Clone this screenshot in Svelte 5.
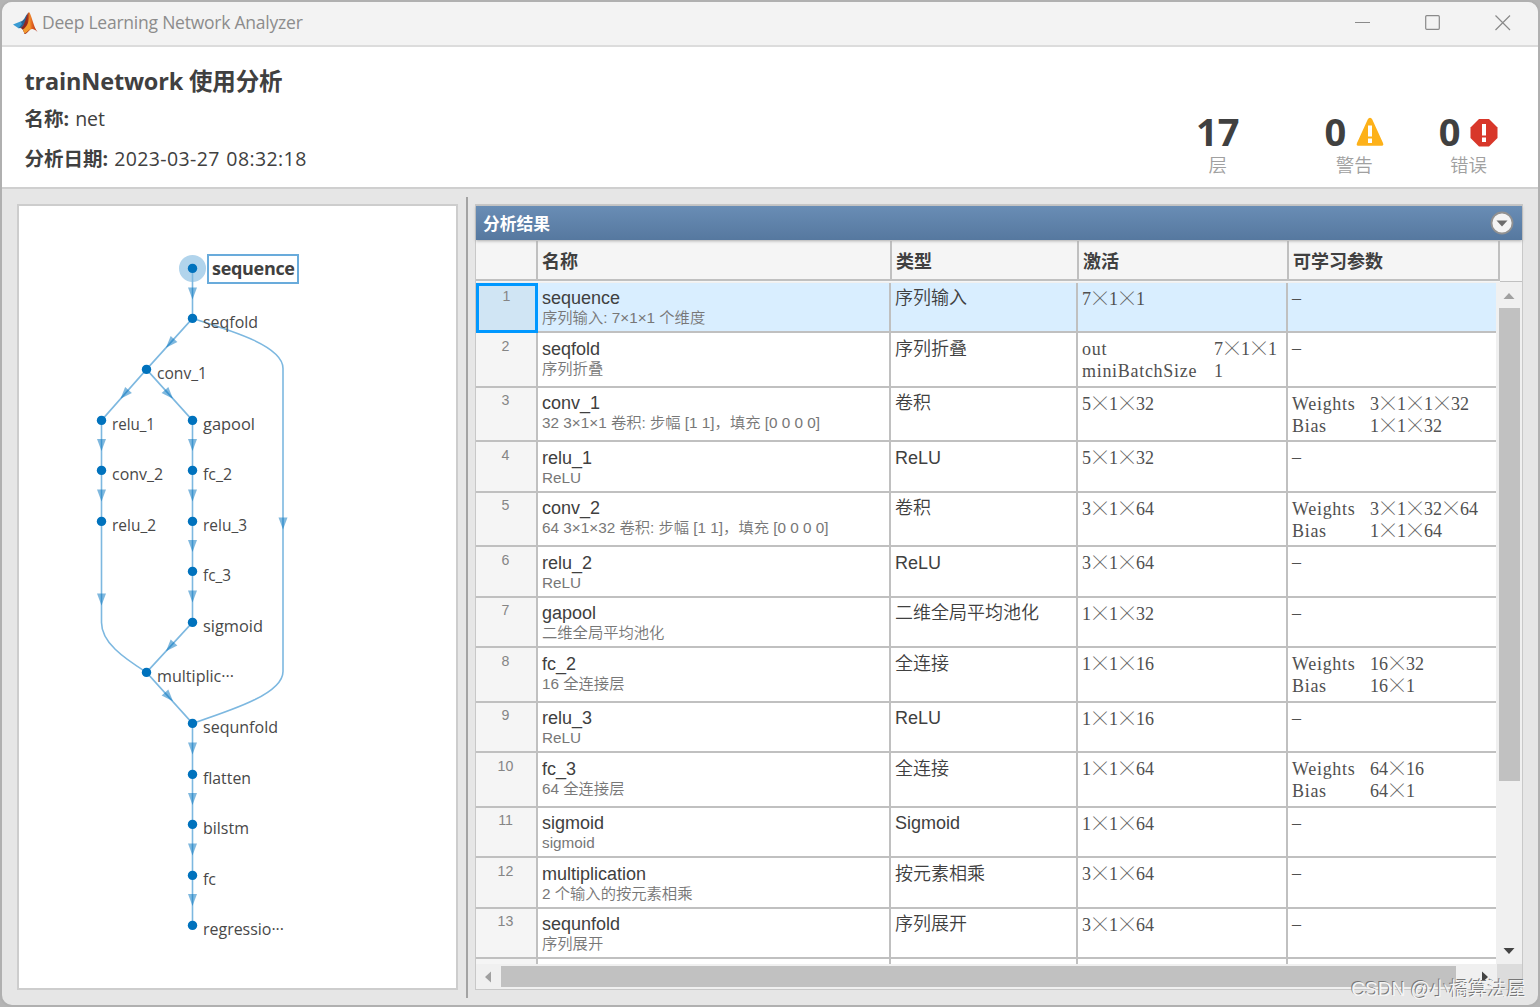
<script lang="ts">
	type Entry = [string, string];

	interface Layer {
		name: string;
		detail: string;
		type: string;
		activations: Entry[];
		learnables: Entry[];
	}

	const layers: Layer[] = [
		{ name: "sequence", detail: "序列输入: 7×1×1 个维度", type: "序列输入", activations: [["", "7×1×1"]], learnables: [] },
		{ name: "seqfold", detail: "序列折叠", type: "序列折叠", activations: [["out", "7×1×1"], ["miniBatchSize", "1"]], learnables: [] },
		{ name: "conv_1", detail: "32 3×1×1 卷积: 步幅 [1 1]，填充 [0 0 0 0]", type: "卷积", activations: [["", "5×1×32"]], learnables: [["Weights", "3×1×1×32"], ["Bias", "1×1×32"]] },
		{ name: "relu_1", detail: "ReLU", type: "ReLU", activations: [["", "5×1×32"]], learnables: [] },
		{ name: "conv_2", detail: "64 3×1×32 卷积: 步幅 [1 1]，填充 [0 0 0 0]", type: "卷积", activations: [["", "3×1×64"]], learnables: [["Weights", "3×1×32×64"], ["Bias", "1×1×64"]] },
		{ name: "relu_2", detail: "ReLU", type: "ReLU", activations: [["", "3×1×64"]], learnables: [] },
		{ name: "gapool", detail: "二维全局平均池化", type: "二维全局平均池化", activations: [["", "1×1×32"]], learnables: [] },
		{ name: "fc_2", detail: "16 全连接层", type: "全连接", activations: [["", "1×1×16"]], learnables: [["Weights", "16×32"], ["Bias", "16×1"]] },
		{ name: "relu_3", detail: "ReLU", type: "ReLU", activations: [["", "1×1×16"]], learnables: [] },
		{ name: "fc_3", detail: "64 全连接层", type: "全连接", activations: [["", "1×1×64"]], learnables: [["Weights", "64×16"], ["Bias", "64×1"]] },
		{ name: "sigmoid", detail: "sigmoid", type: "Sigmoid", activations: [["", "1×1×64"]], learnables: [] },
		{ name: "multiplication", detail: "2 个输入的按元素相乘", type: "按元素相乘", activations: [["", "3×1×64"]], learnables: [] },
		{ name: "sequnfold", detail: "序列展开", type: "序列展开", activations: [["", "3×1×64"]], learnables: [] }
	];

	// graph coordinates are relative to the graph panel
	const nodes = [
		{ label: "seqfold", x: 173.5, y: 113, w: 55 },
		{ label: "conv_1", x: 127.5, y: 164, w: 50 },
		{ label: "relu_1", x: 82.5, y: 215, w: 43 },
		{ label: "gapool", x: 173.5, y: 215, w: 52 },
		{ label: "conv_2", x: 82.5, y: 265, w: 51 },
		{ label: "fc_2", x: 173.5, y: 265, w: 29 },
		{ label: "relu_2", x: 82.5, y: 316, w: 44 },
		{ label: "relu_3", x: 173.5, y: 316, w: 44 },
		{ label: "fc_3", x: 173.5, y: 366, w: 28 },
		{ label: "sigmoid", x: 173.5, y: 417, w: 60 },
		{ label: "multiplic···", x: 127.5, y: 467, w: 77 },
		{ label: "sequnfold", x: 173.5, y: 518, w: 75 },
		{ label: "flatten", x: 173.5, y: 569, w: 48 },
		{ label: "bilstm", x: 173.5, y: 619, w: 46 },
		{ label: "fc", x: 173.5, y: 670, w: 13 },
		{ label: "regressio···", x: 173.5, y: 720, w: 81 }
	];

	const edges = [
		"M173.5 63V113L127.5 164L82.5 215V417C82.5 437 104 452 127.5 467L173.5 518V720",
		"M127.5 164L173.5 215V417L127.5 467",
		"M173.5 113C215 126 264 141 264 163V466C264 488 215 504 173.5 518"
	];

	const arrows = [
		[173.5, 88, 0], [151, 138, 42], [105.5, 189, 42], [150, 189, -42],
		[82.5, 239.5, 0], [173.5, 239.5, 0], [82.5, 290, 0], [173.5, 290, 0],
		[173.5, 340.5, 0], [173.5, 391, 0], [82.5, 394, 0], [264, 318, 0],
		[151, 441.5, 42], [150, 491.5, -42], [173.5, 543, 0], [173.5, 593.5, 0],
		[173.5, 644, 0], [173.5, 694.5, 0]
	];
</script>

{#snippet dims(text: string)}
	{#each text as ch}{#if ch === "×"}<span class="times">×</span>{:else}{ch}{/if}{/each}
{/snippet}

{#snippet entries(list: Entry[])}
	{#if list.length === 0}
		<span class="none">–</span>
	{/if}
	{#each list as [label, value]}
		{#if label}<span class="label">{label}</span>{/if}
		<span class="value" class:alone={!label}>{@render dims(value)}</span>
	{/each}
{/snippet}

<div class="window">
	<header class="titlebar">
		<svg class="logo" width="25" height="24" viewBox="0 0 25 24">
			<defs>
				<linearGradient id="flame" x1="0" x2="1" y1="0" y2="0">
					<stop offset="0" stop-color="#7a2320" />
					<stop offset=".4" stop-color="#9d2a1c" />
					<stop offset=".55" stop-color="#f08a2c" />
					<stop offset=".7" stop-color="#e0601f" />
					<stop offset="1" stop-color="#a8281c" />
				</linearGradient>
			</defs>
			<path d="M0 13.500L7.500 10.500L11 13L8 17L5.500 17.200Z" fill="#3a9bd3" />
			<path d="M7.500 10.500C11 10.500 12 5 15 2L13 11L9 16.500L5.500 17.200L9 13Z" fill="#2a6494" />
			<path d="M16 1C18.500 3 20 15 24.500 21C21 17.500 18.500 17.500 17 19C14.500 21 13.500 23 11.500 23C10.500 20 9.500 17.500 7.500 17C12.500 15 13 3 16 1Z" fill="url(#flame)" />
			<path d="M16 5C16.500 10 14 16 9.800 18.500L11.500 22.500C14.500 21.500 15.500 18.500 17.500 17.500C17 12 17 8 16 5Z" fill="#f39a2e" />
		</svg>
		<span class="caption">Deep Learning Network Analyzer</span>
		<div class="controls">
			<svg width="16" height="16" viewBox="0 0 16 16"><path d="M0 7.500H15" /></svg>
			<svg width="16" height="16" viewBox="0 0 16 16"><rect x=".7" y=".7" width="13.600" height="13.600" rx="1" /></svg>
			<svg width="16" height="16" viewBox="0 0 16 16"><path d="M.5 .5L15 15M15 .5L.5 15" /></svg>
		</div>
	</header>

	<section class="summary">
		<div class="info">
			<h1>trainNetwork 使用分析</h1>
			<p><b>名称:</b> net</p>
			<p><b>分析日期:</b> <span class="date">2023-03-27 08:32:18</span></p>
		</div>
		<div class="stats">
			<div class="stat">
				<div class="count">17</div>
				<div class="unit">层</div>
			</div>
			<div class="stat warnings">
				<div class="count">
					0
					<svg width="28" height="30" viewBox="0 0 28 30">
						<path d="M14 .7Q15.500 .7 16.300 2.500L27 26Q28 28.800 26 28.800H2Q0 28.800 1 26L11.700 2.500Q12.500 .7 14 .7Z" fill="#fdb119" />
						<path d="M12 8.500H16V19.500H12ZM12 21.500H16V26H12Z" fill="#fff" />
					</svg>
				</div>
				<div class="unit">警告</div>
			</div>
			<div class="stat errors">
				<div class="count">
					0
					<svg width="28" height="30" viewBox="0 0 28 30">
						<path d="M9 2H19L27.500 10.500V21L19 29.500H9L.5 21V10.500Z" fill="#d8372a" />
						<path d="M12 7H16V18.500H12ZM12 20.500H16V25H12Z" fill="#fff" />
					</svg>
				</div>
				<div class="unit">错误</div>
			</div>
		</div>
	</section>

	<main>
		<section class="graph">
			<svg width="437" height="782" viewBox="0 0.6 437 782">
				<circle class="halo" cx="173.500" cy="63" r="13.500" />
				{#each edges as d}
					<path class="edge" {d} />
				{/each}
				{#each arrows as [x, y, angle]}
					<path class="arrow" d="M-4.500 -6H4.500L0 6Z" transform="translate({x} {y}) rotate({angle})" />
				{/each}
				<circle class="node" cx="173.500" cy="63" r="4.700" />
				<rect class="selection" x="189" y="49.600" width="90" height="28" />
				<text class="current" x="193" y="69.600" textLength="83">sequence</text>
				{#each nodes as node}
					<circle class="node" cx={node.x} cy={node.y} r="4.700" />
					<text x={node.x + 10.5} y={node.y + 9.4} textLength={node.w} lengthAdjust="spacingAndGlyphs">{node.label}</text>
				{/each}
			</svg>
		</section>

		<div class="splitter"></div>

		<section class="results">
			<div class="banner">
				<h2>分析结果</h2>
				<svg width="24" height="24" viewBox="0 0 24 24">
					<circle cx="12" cy="12" r="10.500" fill="#f4f4f4" stroke="#919191" stroke-width="1.800" />
					<path d="M6.500 9.500H17.500L12 15.500Z" fill="#6c6c6c" />
				</svg>
			</div>
			<div class="row head">
				<div></div>
				<div>名称</div>
				<div>类型</div>
				<div>激活</div>
				<div>可学习参数</div>
				<div class="filler"></div>
			</div>
			<div class="scroller">
				<div class="rows">
					{#each layers as layer, i}
						<div
							class="row"
							class:selected={i === 0}
							class:tall={layer.activations.length > 1 || layer.learnables.length > 1}
						>
							<div class="index">{i + 1}</div>
							<div class="name">{layer.name}<small>{layer.detail}</small></div>
							<div class="type">{layer.type}</div>
							<div class="entries activations">{@render entries(layer.activations)}</div>
							<div class="entries learnables">{@render entries(layer.learnables)}</div>
						</div>
					{/each}
					<div class="row">
						<div class="index"></div>
						<div></div>
						<div></div>
						<div></div>
						<div class="learnables"></div>
					</div>
				</div>
				<div class="vbar">
					<svg width="12" height="6" viewBox="0 0 12 6"><path d="M.5 6H11.500L6 0Z" fill="#a0a0a0" /></svg>
					<div class="thumb"></div>
					<svg width="12" height="6" viewBox="0 0 12 6"><path d="M.5 0H11.500L6 6Z" fill="#444" /></svg>
				</div>
			</div>
			<div class="hbar">
				<svg width="6" height="12" viewBox="0 0 6 12"><path d="M6 .5V11.500L0 6Z" fill="#a0a0a0" /></svg>
				<div class="thumb"></div>
				<svg width="6" height="12" viewBox="0 0 6 12"><path d="M0 .5V11.500L6 6Z" fill="#444" /></svg>
				<div class="corner"></div>
			</div>
		</section>
	</main>
	<div class="watermark">CSDN @小橘算法屋</div>
</div>

<style>
	:global(body) {
		background: #b4b4b4;
	}

	.window {
		position: relative;
		box-sizing: border-box;
		width: 1540px;
		height: 1007px;
		display: flex;
		flex-direction: column;
		overflow: hidden;
		border: 2px solid #b0b0b0;
		border-radius: 12px;
		background: #e6e6e6;
		color: #404040;
		font-family: "Open Sans", "Noto Sans CJK SC", sans-serif;
	}

	.titlebar {
		box-sizing: border-box;
		height: 45px;
		display: flex;
		align-items: center;
		padding: 0 27px 2px 11px;
		border-bottom: 2px solid #dcdcdc;
		background: #f3f3f3;
	}

	.caption {
		margin: -2px 0 0 4px;
		color: #8c8c8c;
		font-size: 17.5px;
		letter-spacing: -0.23px;
	}

	.controls {
		display: flex;
		gap: 54px;
		margin-left: auto;
	}

	.controls svg {
		fill: none;
		stroke: #8a8a8a;
		stroke-width: 1.2;
	}

	.summary {
		box-sizing: border-box;
		height: 142px;
		display: flex;
		justify-content: space-between;
		padding: 16px 40px 0 22.5px;
		border-bottom: 2px solid #cfcfcf;
		background: #fff;
	}

	h1, h2, p {
		margin: 0;
	}

	h1 {
		height: 36px;
		font-size: 23.5px;
		letter-spacing: -0.18px;
		line-height: 36px;
	}

	p {
		height: 40px;
		font-size: 19.5px;
		line-height: 40px;
		word-spacing: 1px;
	}

	.date {
		letter-spacing: 0.4px;
	}

	.stats {
		display: flex;
		padding-top: 48px;
	}

	.stat {
		display: flex;
		flex-direction: column;
		align-items: center;
	}

	.warnings {
		margin-left: 85px;
	}

	.errors {
		margin-left: 55px;
	}

	.count {
		height: 40px;
		display: flex;
		align-items: center;
		gap: 9.5px;
		font-size: 38px;
		font-weight: bold;
		line-height: 40px;
	}

	.count svg {
		margin-top: 2px;
	}

	.unit {
		color: #a0a0a0;
		font-size: 18.5px;
		font-weight: 350;
		line-height: 27px;
	}

	main {
		flex: 1;
		display: flex;
		align-items: flex-start;
		padding: 8px 15px 0;
	}

	.graph {
		box-sizing: border-box;
		width: 441px;
		height: 786px;
		margin-top: 7px;
		border: 2px solid #cdcdcd;
		background: #fff;
	}

	.graph svg {
		display: block;
	}

	.graph text {
		fill: #484848;
		font-size: 16.5px;
	}

	.graph .current {
		fill: #404040;
		font-size: 18px;
		font-weight: bold;
	}

	.halo {
		fill: #b1d4ec;
	}

	.edge {
		fill: none;
		stroke: #7db8e0;
		stroke-width: 1.6;
	}

	.arrow {
		fill: #0072bd;
		fill-opacity: 0.5;
	}

	.node {
		fill: #0072bd;
	}

	.selection {
		fill: #fff;
		stroke: #69abdb;
		stroke-width: 2;
	}

	.splitter {
		width: 2px;
		height: 801px;
		margin: 0 7px 0 8px;
		background: #a3a3a3;
	}

	.results {
		box-sizing: border-box;
		width: 1048px;
		height: 786px;
		margin-top: 7px;
		border: 1px solid #c8c8c8;
		border-top-width: 2px;
		background: #f0f0f0;
	}

	.banner {
		position: relative;
		height: 34px;
		display: flex;
		align-items: center;
		justify-content: space-between;
		padding: 0 8px 0 7px;
		background: linear-gradient(#698db5, #56789f);
		box-shadow: 0 1px 3px #aaa;
	}

	h2 {
		color: #fff;
		font-size: 16.8px;
	}

	.row {
		display: grid;
		grid-template-columns: 62px 353px 187px 210px 208px;
		box-sizing: border-box;
		height: 50.5px;
		background: #fff;
	}

	.row.tall {
		height: 54.5px;
	}

	.row > div {
		box-sizing: border-box;
		padding-left: 4px;
		border-right: 2px solid #c0c0c0;
		border-bottom: 2px solid #c0c0c0;
	}

	.row > .learnables {
		border-right: 0;
	}

	.row.head {
		grid-template-columns: 62px 354px 187px 210px 211px 22px;
		grid-template-rows: 40px;
		height: 42px;
		padding-top: 1px;
		background: #f5f5f5;
		font-size: 18px;
		font-weight: bold;
		line-height: 38px;
	}

	.row.head > div {
		padding-top: 1px;
	}

	.row.head > .filler {
		height: 42px;
		border-right: 0;
	}

	.scroller {
		height: 682px;
		display: flex;
		overflow: hidden;
	}

	.rows {
		width: 1020px;
		padding-top: 0.5px;
	}

	.row.selected {
		background: #d9eeff;
	}

	.row > .index {
		padding: 4.5px 1px 0 0;
		background: #f5f5f5;
		color: #858585;
		font-family: "Liberation Sans", sans-serif;
		font-size: 14.2px;
		line-height: 17px;
		text-align: center;
	}

	.row.selected > .index {
		padding-top: 2px;
		border: 3px solid #0098ff;
		background: #d0e5f4;
	}

	.name {
		padding-top: 5.5px;
		font-family: "Liberation Sans", "Noto Sans CJK SC", sans-serif;
		font-size: 18px;
		line-height: 20px;
		white-space: nowrap;
	}

	.name small {
		display: block;
		color: #777;
		font-size: 15.3px;
		font-weight: 350;
		line-height: 19px;
	}

	.type {
		padding-top: 5.5px;
		font-family: "Liberation Sans", "Noto Sans CJK SC", sans-serif;
		font-size: 18px;
		font-weight: 350;
		line-height: 20px;
	}

	.entries {
		display: grid;
		grid-template-columns: 132px auto;
		grid-auto-rows: 22px;
		align-content: start;
		padding-top: 5px;
		color: #505050;
		font-family: "Liberation Serif", serif;
		font-size: 18px;
		line-height: 22px;
		white-space: nowrap;
	}

	.learnables {
		grid-template-columns: 78px auto;
	}

	.label {
		letter-spacing: 0.7px;
	}

	.alone {
		grid-column: 1 / 3;
	}

	.none {
		line-height: 20px;
	}

	/* full-width multiplication sign, kept out of the line's height */
	.times {
		display: inline-block;
		width: 18px;
		height: 11px;
		opacity: 0.99;
		color: #606060;
		font-family: "Noto Sans CJK SC", sans-serif;
		font-size: 22px;
		font-weight: 100;
		line-height: 11px;
		text-align: center;
		text-indent: -2px;
		vertical-align: -1px;
	}

	.vbar {
		width: 26px;
		box-sizing: border-box;
		display: flex;
		flex-direction: column;
		align-items: center;
		padding: 11px 1px 10px;
		background: #f0f0f0;
	}

	.vbar .thumb {
		width: 21px;
		height: 473px;
		margin: 9px 0 auto;
		background: #c1c1c1;
	}

	.hbar {
		height: 25px;
		display: flex;
		align-items: center;
		padding-left: 9px;
	}

	.hbar .thumb {
		width: 955px;
		height: 21px;
		margin: 0 26px 0 10px;
		background: #c1c1c1;
	}

	.corner {
		align-self: stretch;
		width: 25px;
		margin-left: auto;
		background: #dcdcdc;
	}

	.watermark {
		position: absolute;
		right: 12px;
		bottom: 3px;
		color: #f4f4f4;
		font-family: "Liberation Sans", "Noto Sans CJK SC", sans-serif;
		font-size: 19.5px;
		font-weight: 350;
		letter-spacing: -0.3px;
		line-height: 26px;
		text-shadow: -1px -1px 0 #777;
	}
</style>
